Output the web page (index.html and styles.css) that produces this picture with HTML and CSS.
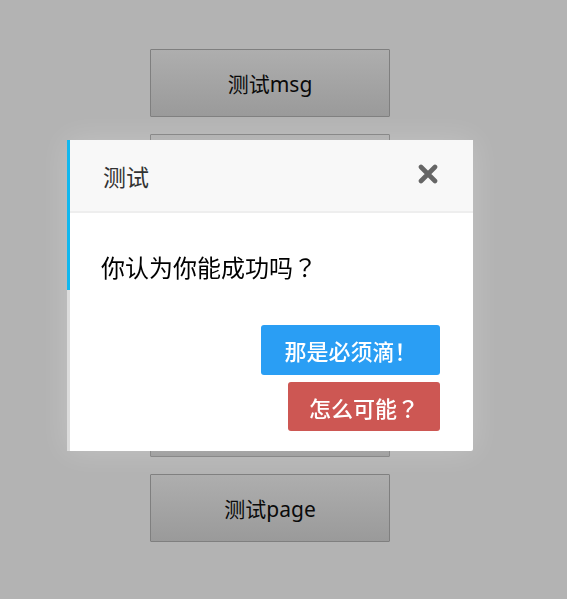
FILE: index.html
```html
<!DOCTYPE html>
<html lang="zh-CN">
<head>
<meta charset="utf-8">
<title>测试</title>
<link rel="stylesheet" href="styles.css">
</head>
<body>
<div class="page">
  <button class="demo-btn">测试msg</button>
  <button class="demo-btn">测试alert</button>
  <button class="demo-btn">测试confirm</button>
  <button class="demo-btn">测试prompt</button>
  <button class="demo-btn">测试tips</button>
  <button class="demo-btn">测试page</button>
</div>

<div class="dialog">
  <div class="dialog-head">
    <span class="dialog-title">测试</span>
    <span class="dialog-close">
      <svg width="20" height="20" viewBox="0 0 20 20"><path d="M3 3 L17 17 M17 3 L3 17" stroke="#666" stroke-width="4.6" stroke-linecap="round" fill="none"/></svg>
    </span>
  </div>
  <div class="dialog-body">你认为你能成功吗<span class="punct" lang="zh-TW">？</span></div>
  <div class="dialog-foot">
    <button class="act act-blue">那是必须滴！</button>
    <button class="act act-red">怎么可能<span class="punct" lang="zh-TW">？</span></button>
  </div>
</div>
</body>
</html>
```

FILE: styles.css
```css
html, body {
  margin: 0;
  padding: 0;
  background: #b3b3b3;
  height: 100%;
  overflow: hidden;
}

body {
  font-family: "Noto Sans", "Noto Sans CJK SC", sans-serif;
}

.page {
  display: flex;
  flex-direction: column;
  align-items: center;
  padding-top: 49px;
  padding-right: 27px;
  gap: 17px;
}

.demo-btn {
  box-sizing: border-box;
  width: 240px;
  height: 68px;
  border: 1px solid #7f7f7f;
  border-radius: 1px;
  background: linear-gradient(#aeaeae, #9a9a9a);
  font-family: "Noto Sans", "Noto Sans CJK SC", sans-serif;
  font-size: 21px;
  color: #0a0a0a;
  padding: 0;
}

.dialog {
  position: fixed;
  left: 67px;
  top: 140px;
  width: 406px;
  height: 311px;
  box-sizing: border-box;
  background: #fff;
  border-left: 3px solid #dcdcdc;
  border-radius: 0 2px 2px 0;
  box-shadow: 0 0 30px rgba(255, 255, 255, 0.22);
  display: flex;
  flex-direction: column;
}

.dialog::before {
  content: "";
  position: absolute;
  left: -3px;
  top: 0;
  width: 3px;
  height: 150px;
  background: #11b8ef;
}

.dialog-head {
  height: 71px;
  background: #f8f8f8;
  border-bottom: 2px solid #eeeeee;
  display: flex;
  align-items: center;
  justify-content: space-between;
  padding: 0 35px 0 33px;
}

.dialog-title {
  font-family: "Noto Sans CJK SC", sans-serif;
  font-size: 23px;
  color: #333;
  line-height: 24px;
  padding-top: 1px;
}

.dialog-close {
  display: flex;
  width: 20px;
  height: 20px;
  margin-top: -3px;
}

.dialog-body {
  padding: 42px 33px 0 31px;
  font-family: "Noto Sans CJK SC", sans-serif;
  font-size: 24px;
  line-height: 24px;
  color: #000;
}

.punct {
  font-family: "Noto Sans CJK TC", sans-serif;
}

.dialog-foot {
  margin-top: 46px;
  padding-right: 33px;
  display: flex;
  flex-direction: column;
  align-items: flex-end;
  gap: 7px;
}

.act {
  border: none;
  border-radius: 3px;
  color: #fff;
  font-family: "Noto Sans CJK SC", sans-serif;
  font-size: 22px;
  font-weight: 500;
  line-height: 22px;
  padding: 0;
  text-align: center;
}

.act-blue {
  width: 179px;
  height: 50px;
  background: #2a9ef4;
}

.act-red {
  width: 152px;
  height: 49px;
  background: #cd5753;
}
```
